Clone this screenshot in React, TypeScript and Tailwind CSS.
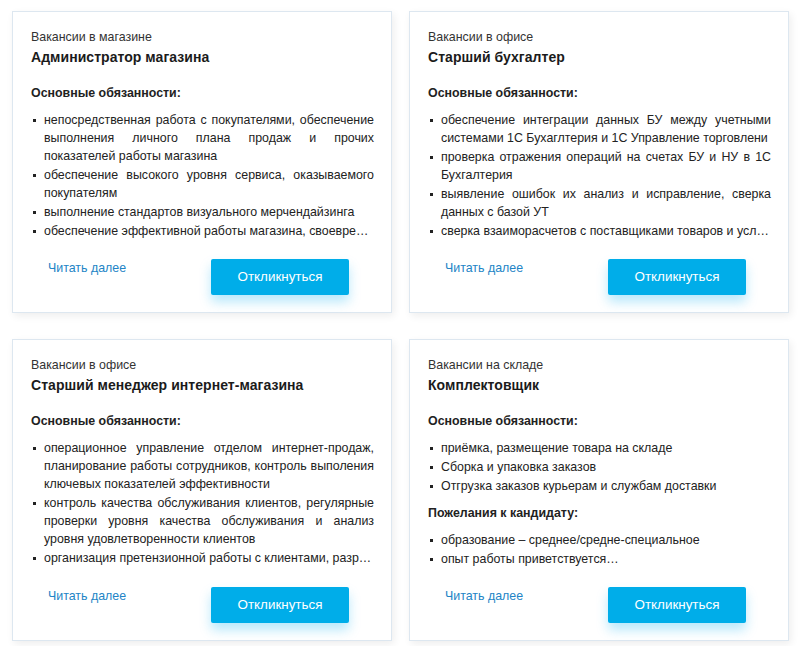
import React from "react";

type Section = { heading: string; items: string[] };
type Job = { category: string; title: string; sections: Section[] };

const jobs: Job[] = [
  {
    category: "Вакансии в магазине",
    title: "Администратор магазина",
    sections: [
      {
        heading: "Основные обязанности:",
        items: [
          "непосредственная работа с покупателями, обеспечение выполнения личного плана продаж и прочих показателей работы магазина",
          "обеспечение высокого уровня сервиса, оказываемого покупателям",
          "выполнение стандартов визуального мерчендайзинга",
          "обеспечение эффективной работы магазина, своевре…",
        ],
      },
    ],
  },
  {
    category: "Вакансии в офисе",
    title: "Старший бухгалтер",
    sections: [
      {
        heading: "Основные обязанности:",
        items: [
          "обеспечение интеграции данных БУ между учетными системами 1С Бухаглтерия и 1С Управление торговлени",
          "проверка отражения операций на счетах БУ и НУ в 1С Бухгалтерия",
          "выявление ошибок их анализ и исправление, сверка данных с базой УТ",
          "сверка взаиморасчетов с поставщиками товаров и усл…",
        ],
      },
    ],
  },
  {
    category: "Вакансии в офисе",
    title: "Старший менеджер интернет-магазина",
    sections: [
      {
        heading: "Основные обязанности:",
        items: [
          "операционное управление отделом интернет-продаж, планирование работы сотрудников, контроль выполения ключевых показателей эффективности",
          "контроль качества обслуживания клиентов, регулярные проверки уровня качества обслуживания и анализ уровня удовлетворенности клиентов",
          "организация претензионной работы с клиентами, разр…",
        ],
      },
    ],
  },
  {
    category: "Вакансии на складе",
    title: "Комплектовщик",
    sections: [
      {
        heading: "Основные обязанности:",
        items: [
          "приёмка, размещение товара на складе",
          "Сборка и упаковка заказов",
          "Отгрузка заказов курьерам и службам доставки",
        ],
      },
      {
        heading: "Пожелания к кандидату:",
        items: ["образование – среднее/средне-специальное", "опыт работы приветствуется…"],
      },
    ],
  },
];

function Card({ job }: { job: Job }) {
  return (
    <div className="flex h-[302px] flex-col border border-[#dde7f0] bg-white pl-[18px] pr-[17px] pt-[16px] pb-[17px] shadow-[2px_3px_8px_rgba(0,0,0,0.07)]">
      <div className="text-[12.4px] leading-[18px] text-[#333]">{job.category}</div>
      <div className="mt-[1px] text-[14px] font-bold leading-[20px] tracking-[0.05px] text-[#1b1b1b]">{job.title}</div>
      <div className="flex-1">
        {job.sections.map((s, i) => (
          <div key={i} className={i === 0 ? "mt-[17px]" : "mt-[9px]"}>
            <div className="text-[12.4px] font-bold leading-[18px] text-[#222]">{s.heading}</div>
            <ul className="mt-[9px] flex flex-col gap-[1px]">
              {s.items.map((it, j) => {
                const last = it.endsWith("…");
                return (
                  <li key={j} className="flex text-[12.4px] leading-[18px] text-[#222]">
                    <span className="mt-[8px] ml-[2px] mr-[8px] h-[3px] w-[3px] shrink-0 bg-[#222]" />
                    <span className={last ? "flex-1 overflow-hidden whitespace-nowrap" : "flex-1 text-justify"}>{it}</span>
                  </li>
                );
              })}
            </ul>
          </div>
        ))}
      </div>
      <div className="flex items-start">
        <a className="ml-[17px] text-[12.4px] leading-[18px] text-[#2284c6]">Читать далее</a>
        <button className="ml-auto mr-[25px] flex h-[36px] w-[138px] items-center justify-center rounded-[2px] bg-[#00ade9] text-[13.4px] text-white shadow-[0_7px_12px_rgba(0,174,239,0.28)]">
          Откликнуться
        </button>
      </div>
    </div>
  );
}

export default function App() {
  return (
    <div
      className="h-[646px] w-[800px] bg-white pl-[12px] pr-[11px] pt-[11px]"
      style={{ fontFamily: '"Liberation Sans", Arial, sans-serif' }}
    >
      <div className="grid grid-cols-2 gap-x-[17px] gap-y-[26px]">
        {jobs.map((j, i) => (
          <Card key={i} job={j} />
        ))}
      </div>
    </div>
  );
}
